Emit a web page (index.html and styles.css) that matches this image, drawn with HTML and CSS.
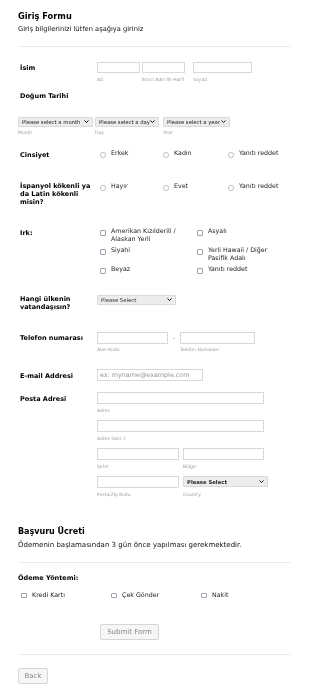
FILE: index.html
```html
<!DOCTYPE html>
<html lang="tr">
<head>
    <meta charset="UTF-8">
    <meta name="viewport" content="width=device-width, initial-scale=1.0">
    <title>Giriş Formu</title>
    <link rel="stylesheet" href="styles.css">
</head>
<body>
    <div class="form">
        <div class="header">
            <h1>Giriş Formu</h1>
            <p>Giriş bilgilerinizi lütfen aşağıya giriniz</p>
        </div>
        <div class="divider first"></div>

        <!-- İsim -->
        <div class="line line-name">
            <div class="label pad-input">İsim</div>
            <div class="field">
                <div class="part">
                    <div class="input w-first"></div>
                    <div class="sublabel">Ad</div>
                </div>
                <div class="part">
                    <div class="input w-first"></div>
                    <div class="sublabel">İkinci Adın İlk Harfi</div>
                </div>
                <div class="part last">
                    <div class="input w-last"></div>
                    <div class="sublabel">Soyad</div>
                </div>
            </div>
        </div>

        <!-- Doğum Tarihi -->
        <div class="line-top line-birth">
            <div class="label">Doğum Tarihi</div>
            <div class="dates">
                <div class="part">
                    <div class="select w-month"><span>Please select a month</span><svg class="chev" viewBox="0 0 10 6"><path d="M1 1l4 4 4-4" /></svg></div>
                    <div class="sublabel">Month</div>
                </div>
                <div class="part">
                    <div class="select w-day"><span>Please select a day</span><svg class="chev" viewBox="0 0 10 6"><path d="M1 1l4 4 4-4" /></svg></div>
                    <div class="sublabel">Day</div>
                </div>
                <div class="part">
                    <div class="select w-year"><span>Please select a year</span><svg class="chev" viewBox="0 0 10 6"><path d="M1 1l4 4 4-4" /></svg></div>
                    <div class="sublabel">Year</div>
                </div>
            </div>
        </div>

        <!-- Cinsiyet -->
        <div class="line line-gender">
            <div class="label pad-radio">Cinsiyet</div>
            <div class="radios">
                <div class="option"><span class="radio"></span><span>Erkek</span></div>
                <div class="option"><span class="radio"></span><span>Kadın</span></div>
                <div class="option"><span class="radio"></span><span>Yanıtı reddet</span></div>
            </div>
        </div>

        <!-- İspanyol -->
        <div class="line line-latin">
            <div class="label">İspanyol kökenli ya da Latin kökenli misin?</div>
            <div class="radios">
                <div class="option"><span class="radio"></span><span>Hayır</span></div>
                <div class="option"><span class="radio"></span><span>Evet</span></div>
                <div class="option"><span class="radio"></span><span>Yanıtı reddet</span></div>
            </div>
        </div>

        <!-- Irk -->
        <div class="line line-race">
            <div class="label pad-radio">Irk:</div>
            <div class="checks">
                <div class="option"><span class="check"></span><span>Amerikan Kızılderili / Alaskan Yerli</span></div>
                <div class="option"><span class="check"></span><span>Asyalı</span></div>
                <div class="option"><span class="check"></span><span>Siyahi</span></div>
                <div class="option"><span class="check"></span><span>Yerli Hawaii / Diğer Pasifik Adalı</span></div>
                <div class="option"><span class="check"></span><span>Beyaz</span></div>
                <div class="option"><span class="check"></span><span>Yanıtı reddet</span></div>
            </div>
        </div>

        <!-- Vatandaşlık -->
        <div class="line line-country">
            <div class="label pad-select">Hangi ülkenin vatandaşısın?</div>
            <div class="field">
                <div class="select w-country light"><span>Please Select</span><svg class="chev" viewBox="0 0 10 6"><path d="M1 1l4 4 4-4" /></svg></div>
            </div>
        </div>

        <!-- Telefon -->
        <div class="line line-phone">
            <div class="label pad-input">Telefon numarası</div>
            <div class="field">
                <div class="part">
                    <div class="input w-area"></div>
                    <div class="sublabel">Alan Kodu</div>
                </div>
                <div class="dash">-</div>
                <div class="part">
                    <div class="input w-phone"></div>
                    <div class="sublabel">Telefon Numarası</div>
                </div>
            </div>
        </div>

        <!-- E-mail -->
        <div class="line line-email">
            <div class="label pad-input">E-mail Addresi</div>
            <div class="field">
                <div class="input w-email placeholder">ex: myname@example.com</div>
            </div>
        </div>

        <!-- Posta Adresi -->
        <div class="line line-address">
            <div class="label pad-input">Posta Adresi</div>
            <div class="address">
                <div class="part">
                    <div class="input w-full"></div>
                    <div class="sublabel">Adres</div>
                </div>
                <div class="part">
                    <div class="input w-full"></div>
                    <div class="sublabel">Adres Satır 2</div>
                </div>
                <div class="half-row">
                    <div class="part">
                        <div class="input w-city"></div>
                        <div class="sublabel">Şehir</div>
                    </div>
                    <div class="part">
                        <div class="input w-region"></div>
                        <div class="sublabel">Bölge</div>
                    </div>
                </div>
                <div class="half-row">
                    <div class="part">
                        <div class="input w-city"></div>
                        <div class="sublabel">Posta/Zip Kodu</div>
                    </div>
                    <div class="part">
                        <div class="select w-zip strong"><span>Please Select</span><svg class="chev" viewBox="0 0 10 6"><path d="M1 1l4 4 4-4" /></svg></div>
                        <div class="sublabel">Country</div>
                    </div>
                </div>
            </div>
        </div>

        <!-- Başvuru Ücreti -->
        <div class="header fee">
            <h1>Başvuru Ücreti</h1>
            <p class="desc">Ödemenin başlamasından 3 gün önce yapılması gerekmektedir.</p>
        </div>
        <div class="divider second"></div>

        <div class="payment">
            <div class="label pay-label">Ödeme Yöntemi:</div>
            <div class="pay-options">
                <div class="option"><span class="check"></span><span>Kredi Kartı</span></div>
                <div class="option"><span class="check"></span><span>Çek Gönder</span></div>
                <div class="option"><span class="check"></span><span>Nakit</span></div>
            </div>
        </div>

        <div class="submit-row">
            <button class="btn submit">Submit Form</button>
        </div>
        <div class="divider third"></div>
        <div class="back-row">
            <button class="btn back">Back</button>
        </div>
    </div>
</body>
</html>
```

FILE: styles.css
```css
* {
    margin: 0;
    padding: 0;
    box-sizing: border-box;
}

body {
    font-family: "DejaVu Sans", Verdana, sans-serif;
    color: #000;
    background: #fff;
}

.form {
    width: 310px;
    padding: 11px 19px 0 18px;
    will-change: transform;
}

.header h1 {
    font-size: 8.25px;
    line-height: 10px;
    font-weight: bold;
}

.header p {
    font-size: 6.7px;
    line-height: 8px;
    margin-top: 3.5px;
    color: #111;
}

.divider {
    height: 1px;
    background-color: #ececec;
}

.divider.first {
    margin-top: 13px;
}

/* filas */
.line {
    display: flex;
}

.label {
    width: 79px;
    flex-shrink: 0;
    padding-left: 2px;
    padding-right: 2px;
    font-size: 6.5px;
    line-height: 8px;
    font-weight: bold;
}

.pad-input {
    padding-top: 2.5px;
}

.pad-radio {
    padding-top: 2px;
}

.pad-select {
    padding-top: 0.5px;
}

.field {
    display: flex;
    align-items: flex-start;
}

.part {
    display: flex;
    flex-direction: column;
}

.input {
    height: 12px;
    border: 1px solid #d6d8dd;
    background-color: #fff;
}

.sublabel {
    font-size: 4.5px;
    line-height: 5px;
    margin-top: 4px;
    color: #9a9ca1;
    white-space: nowrap;
}

.select {
    height: 10px;
    display: flex;
    align-items: center;
    justify-content: space-between;
    padding: 0 3px 0 3px;
    font-size: 5.3px;
    white-space: nowrap;
    background-color: #ececec;
    border: 1px solid #d9d9d9;
    border-radius: 1px;
    color: #222;
}

.chev {
    width: 5px;
    height: 3px;
    flex-shrink: 0;
}

.chev path {
    fill: none;
    stroke: #111;
    stroke-width: 2;
}

/* İsim */
.line-name {
    margin-top: 15px;
}

.line-name .part {
    margin-right: 2px;
}

.line-name .part:nth-child(2) {
    margin-right: 8px;
}

.w-first {
    width: 43px;
    height: 11.5px;
}

.w-last {
    width: 59px;
    height: 11.5px;
}

/* Doğum Tarihi */
.line-birth {
    margin-top: 9.5px;
}

.dates {
    display: flex;
    margin-top: 17px;
}

.dates .part {
    margin-right: 2px;
}

.dates .part:nth-child(2) {
    margin-right: 4px;
}

.dates .sublabel {
    margin-top: 3px;
}

.w-month {
    width: 75px;
}

.w-day {
    width: 64px;
}

.w-year {
    width: 67px;
}

/* radios */
.radios {
    display: grid;
    grid-template-columns: 63px 65px auto;
}

.option {
    display: flex;
    align-items: flex-start;
    font-size: 6.3px;
    line-height: 8px;
    color: #1c1c1c;
}

.radio {
    width: 5.5px;
    height: 5.5px;
    flex-shrink: 0;
    margin: 3.5px 5.5px 0 3px;
    border: 1px solid #b7bbc3;
    border-radius: 50%;
}

.check {
    width: 5.5px;
    height: 5.5px;
    flex-shrink: 0;
    margin: 3.5px 5.5px 0 3px;
    border: 1px solid #9ea3ad;
    border-radius: 1px;
}

.line-gender {
    margin-top: 14px;
}

.line-latin {
    margin-top: 23px;
}

.line-race {
    margin-top: 21px;
}

.checks {
    display: grid;
    grid-template-columns: 97px 85px;
    row-gap: 3px;
}

/* vatandaşlık */
.line-country {
    margin-top: 21px;
}

.w-country {
    width: 79px;
}

.light span {
    color: #333;
}

/* telefon */
.line-phone {
    margin-top: 20.5px;
}

.line-phone .sublabel {
    margin-top: 3.5px;
}

.w-area {
    width: 71px;
}

.w-phone {
    width: 75px;
}

.dash {
    width: 12px;
    text-align: center;
    font-size: 6px;
    line-height: 12px;
    color: #777;
}

/* e-mail */
.line-email {
    margin-top: 17px;
}

.w-email {
    width: 106px;
}

.placeholder {
    font-size: 6.4px;
    line-height: 10px;
    padding-left: 2px;
    color: #959595;
    white-space: nowrap;
}

/* adres */
.line-address {
    margin-top: 11px;
}

.address .part + .part,
.address .half-row {
    margin-top: 7px;
}

.half-row {
    display: flex;
}

.half-row .part + .part {
    margin-top: 0;
    margin-left: 4px;
}

.w-full {
    width: 167px;
}

.w-city {
    width: 82px;
}

.w-region {
    width: 81px;
}

.w-zip {
    width: 85px;
    height: 11px;
    margin-bottom: 1px;
}

.strong span {
    font-weight: bold;
    color: #222;
}

/* ödeme */
.fee {
    margin-top: 30px;
}

.fee h1 {
    font-size: 8px;
}

.fee p.desc {
    font-size: 7px;
    margin-top: 3.5px;
}

.divider.second {
    margin-top: 13px;
}

.pay-label {
    padding-left: 0;
    width: auto;
    margin-top: 11.5px;
}

.pay-options {
    display: grid;
    grid-template-columns: 90px 90px 90px;
    margin-top: 9px;
}

.pay-options .check {
    margin-top: 1.5px;
}

.submit-row {
    display: flex;
    margin-top: 25px;
    padding-left: 82px;
}

.btn {
    display: block;
    font-family: "DejaVu Sans", Verdana, sans-serif;
    font-size: 7px;
    height: 16px;
    color: #85888e;
    background-color: #f6f6f6;
    border: 1px solid #d6d6d6;
    border-radius: 2px;
}

.submit {
    width: 59px;
}

.divider.third {
    margin-top: 14px;
}

.back-row {
    display: flex;
    margin-top: 13px;
}

.back {
    width: 30px;
}
```
